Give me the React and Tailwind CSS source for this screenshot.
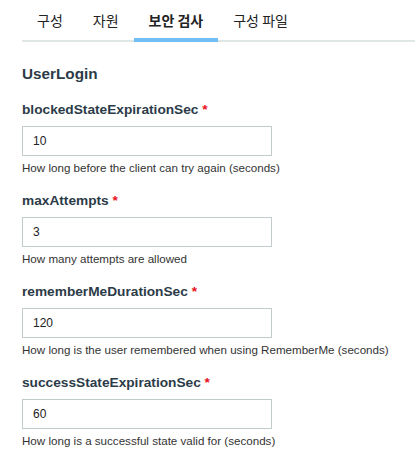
import React from "react";

const fields = [
  { name: "blockedStateExpirationSec", value: "10", help: "How long before the client can try again (seconds)" },
  { name: "maxAttempts", value: "3", help: "How many attempts are allowed" },
  { name: "rememberMeDurationSec", value: "120", help: "How long is the user remembered when using RememberMe (seconds)" },
  { name: "successStateExpirationSec", value: "60", help: "How long is a successful state valid for (seconds)" },
];

const tabs = ["구성", "자원", "보안 검사", "구성 파일"];

export default function App() {
  return (
    <div className="w-[415px] h-[469px] bg-white overflow-hidden" style={{ fontFamily: '"Liberation Sans", Arial, sans-serif' }}>
      <div className="ml-[22px] flex border-b-2 border-[#dee6e6]">
        {tabs.map((t, i) => (
          <div
            key={t}
            className={
              "h-[42px] -mb-[2px] px-[15px] pt-[10px] border-b-4 text-[14px] leading-[20px] text-[#222] " +
              (i === 2 ? "border-[#70bdf8] font-bold" : "border-transparent")
            }
            style={{ fontFamily: '"Noto Sans CJK KR", sans-serif' }}
          >
            {t}
          </div>
        ))}
      </div>
      <div className="pl-[22px] pt-[22px]">
        <div className="text-[15.3px] leading-[20px] font-bold text-[#2c3b48]">UserLogin</div>
        <div className="mt-[16px] flex flex-col">
          {fields.map((f) => (
            <div key={f.name} className="h-[91px]">
              <div className="text-[13.7px] leading-[20px] font-bold text-[#2c3b48]">
                {f.name} <span className="text-[#e8101c]">*</span>
              </div>
              <div className="mt-[6px] w-[250px] h-[30px] border border-[#c3cccc] flex items-center pl-[10px] text-[12px] text-[#222]">
                {f.value}
              </div>
              <div className="mt-[4px] text-[11.6px] leading-[16px] text-[#333]">{f.help}</div>
            </div>
          ))}
        </div>
      </div>
    </div>
  );
}
